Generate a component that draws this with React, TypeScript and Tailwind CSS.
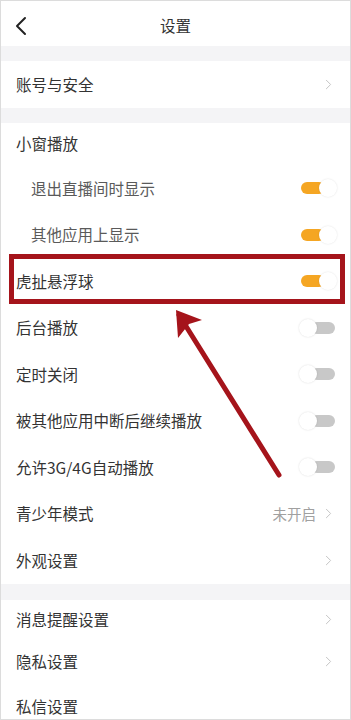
import { ChevronRight } from 'lucide-react';

type Row = {
  label: string;
  kind: 'none' | 'on' | 'off' | 'link';
  sub?: boolean;
  value?: string;
  h: string;
};

const font = { fontFamily: '"Noto Sans CJK SC", "Noto Sans", sans-serif' };

function Toggle({ on }: { on: boolean }) {
  return on ? (
    <div className="relative h-[18px] w-[38px]">
      <div className="absolute left-[2px] top-[3px] h-[12px] w-[24px] rounded-full bg-[#f5a623]" />
      <div className="absolute right-0 top-0 h-[18px] w-[18px] rounded-full bg-white shadow-[0_0_2px_rgba(0,0,0,0.12)]" />
    </div>
  ) : (
    <div className="relative h-[18px] w-[38px]">
      <div className="absolute right-[2px] top-[3px] h-[12px] w-[24px] rounded-full bg-[#c8c8c8]" />
      <div className="absolute left-0 top-0 h-[18px] w-[18px] rounded-full bg-white shadow-[0_0_2px_rgba(0,0,0,0.15)]" />
    </div>
  );
}

function SettingRow({ row }: { row: Row }) {
  return (
    <div className={`flex items-center justify-between pr-[13px] ${row.sub ? 'pl-[30px]' : 'pl-[15px]'} ${row.h}`}>
      <span className={`text-[15.5px] ${row.sub ? 'text-[#5a5a5a]' : 'text-[#333]'}`}>{row.label}</span>
      {row.kind === 'on' && <Toggle on />}
      {row.kind === 'off' && <Toggle on={false} />}
      {row.kind === 'link' && (
        <div className="flex items-center gap-[4px]">
          {row.value && <span className="text-[14.5px] text-[#a0a0a0]">{row.value}</span>}
          <ChevronRight size={17} strokeWidth={1.4} className="text-[#c4c4c4]" />
        </div>
      )}
    </div>
  );
}

const middle: Row[] = [
  { label: '小窗播放', kind: 'none', h: 'h-[42px]' },
  { label: '退出直播间时显示', kind: 'on', sub: true, h: 'h-[46.5px]' },
  { label: '其他应用上显示', kind: 'on', sub: true, h: 'h-[46.5px]' },
  { label: '虎扯悬浮球', kind: 'on', h: 'h-[46.5px]' },
  { label: '后台播放', kind: 'off', h: 'h-[46.5px]' },
  { label: '定时关闭', kind: 'off', h: 'h-[46.5px]' },
  { label: '被其他应用中断后继续播放', kind: 'off', h: 'h-[46.5px]' },
  { label: '允许3G/4G自动播放', kind: 'off', h: 'h-[46.5px]' },
  { label: '青少年模式', kind: 'link', value: '未开启', h: 'h-[46.5px]' },
  { label: '外观设置', kind: 'link', h: 'h-[46.5px]' },
];

const bottom: Row[] = [
  { label: '消息提醒设置', kind: 'link', h: 'h-[40px]' },
  { label: '隐私设置', kind: 'link', h: 'h-[44px]' },
  { label: '私信设置', kind: 'none', h: 'h-[46px]' },
];

export default function App() {
  return (
    <div className="relative h-[720px] w-[351px] overflow-hidden border border-[#dcdcdc] bg-white" style={font}>
      {/* header */}
      <div className="relative flex h-[45px] items-center justify-center pt-[5px]">
        <svg className="absolute left-[14px] top-[15px]" width="12" height="20" viewBox="0 0 12 20">
          <path d="M10 2 L2 10 L10 18" fill="none" stroke="#222" strokeWidth="2" strokeLinecap="round" strokeLinejoin="round" />
        </svg>
        <span className="text-[15.5px] text-[#333]">设置</span>
      </div>
      <div className="h-[15px] bg-[#f4f4f6]" />
      <SettingRow row={{ label: '账号与安全', kind: 'link', h: 'h-[47px]' }} />
      <div className="h-[15px] bg-[#f4f4f6]" />
      <div className="flex flex-col">
        {middle.map((r) => (
          <SettingRow key={r.label} row={r} />
        ))}
      </div>
      <div className="h-[16px] bg-[#f4f4f6]" />
      <div className="flex flex-col">
        {bottom.map((r) => (
          <SettingRow key={r.label} row={r} />
        ))}
      </div>

      {/* annotation: red box + arrow */}
      <div className="absolute left-[8px] top-[253px] h-[50px] w-[336px] border-[5px] border-[#a5141b]" />
      <svg className="pointer-events-none absolute left-0 top-0" width="351" height="720" viewBox="0 0 351 720">
        <line x1="278" y1="474" x2="178" y2="314" stroke="#a5141b" strokeWidth="5" strokeLinecap="round" />
        <path d="M175 309 L201 319 L188 323 L177 337 Z" fill="#a5141b" />
      </svg>
    </div>
  );
}
